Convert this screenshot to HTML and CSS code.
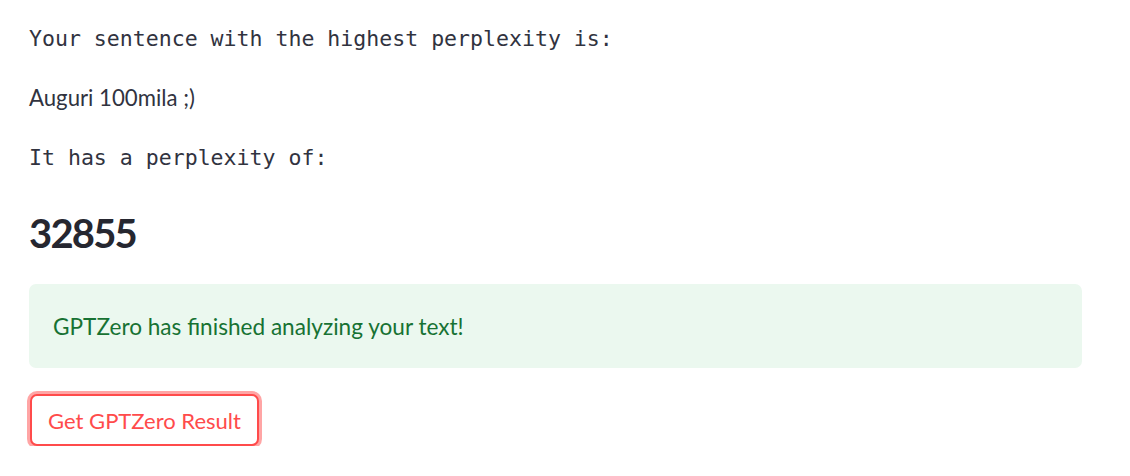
FILE: index.html
```html
<!DOCTYPE html>
<html>
<head>
<meta charset="utf-8">
<link rel="stylesheet" href="styles.css">
</head>
<body>
<main class="main">
  <p class="mono line1">Your sentence with the highest perplexity is:</p>
  <p class="text line2">Auguri 100mila ;)</p>
  <p class="mono line3">It has a perplexity of:</p>
  <h1 class="big">32855</h1>
  <div class="alert">GPTZero has finished analyzing your text!</div>
  <button class="btn">Get GPTZero Result</button>
</main>
</body>
</html>
```
FILE: styles.css
```css
html, body { margin: 0; padding: 0; background: #fff; }
.main {
  padding: 0 48px 0 29px;
  display: flex;
  flex-direction: column;
  align-items: flex-start;
  color: #31333f;
}
.mono {
  font-family: "DejaVu Sans Mono", "Liberation Mono", monospace;
  font-size: 21.55px;
  margin: 0;
  line-height: 30px;
  color: #31333f;
}
.line1 { margin-top: 24px; }
.text {
  font-family: "Lato", "Noto Sans", sans-serif;
  font-size: 22.2px;
  line-height: 30px;
  margin: 29px 0 0;
}
.line3 { margin-top: 30px; }
.big {
  font-family: "Lato", "Noto Sans", sans-serif;
  font-weight: 700;
  font-size: 40px;
  letter-spacing: -1.8px;
  line-height: 52px;
  margin: 34px 0 0;
  color: #262730;
}
.alert {
  align-self: stretch;
  margin-top: 25px;
  background: #ebf8ef;
  border-radius: 7px;
  height: 84px;
  box-sizing: border-box;
  padding: 0 24px;
  display: flex;
  align-items: center;
  font-family: "Lato", "Noto Sans", sans-serif;
  font-size: 22.6px;
  color: #177233;
}
.btn {
  margin-top: 26px;
  margin-left: 1px;
  height: 52px;
  width: 229px;
  box-sizing: border-box;
  border: 2px solid #ff4b4b;
  border-radius: 7px;
  background: #fff;
  box-shadow: 0 0 0 3px rgba(255, 75, 75, 0.5);
  font-family: "Lato", "Noto Sans", sans-serif;
  font-size: 22px;
  color: #ff4b4b;
  padding: 0;
}
```
